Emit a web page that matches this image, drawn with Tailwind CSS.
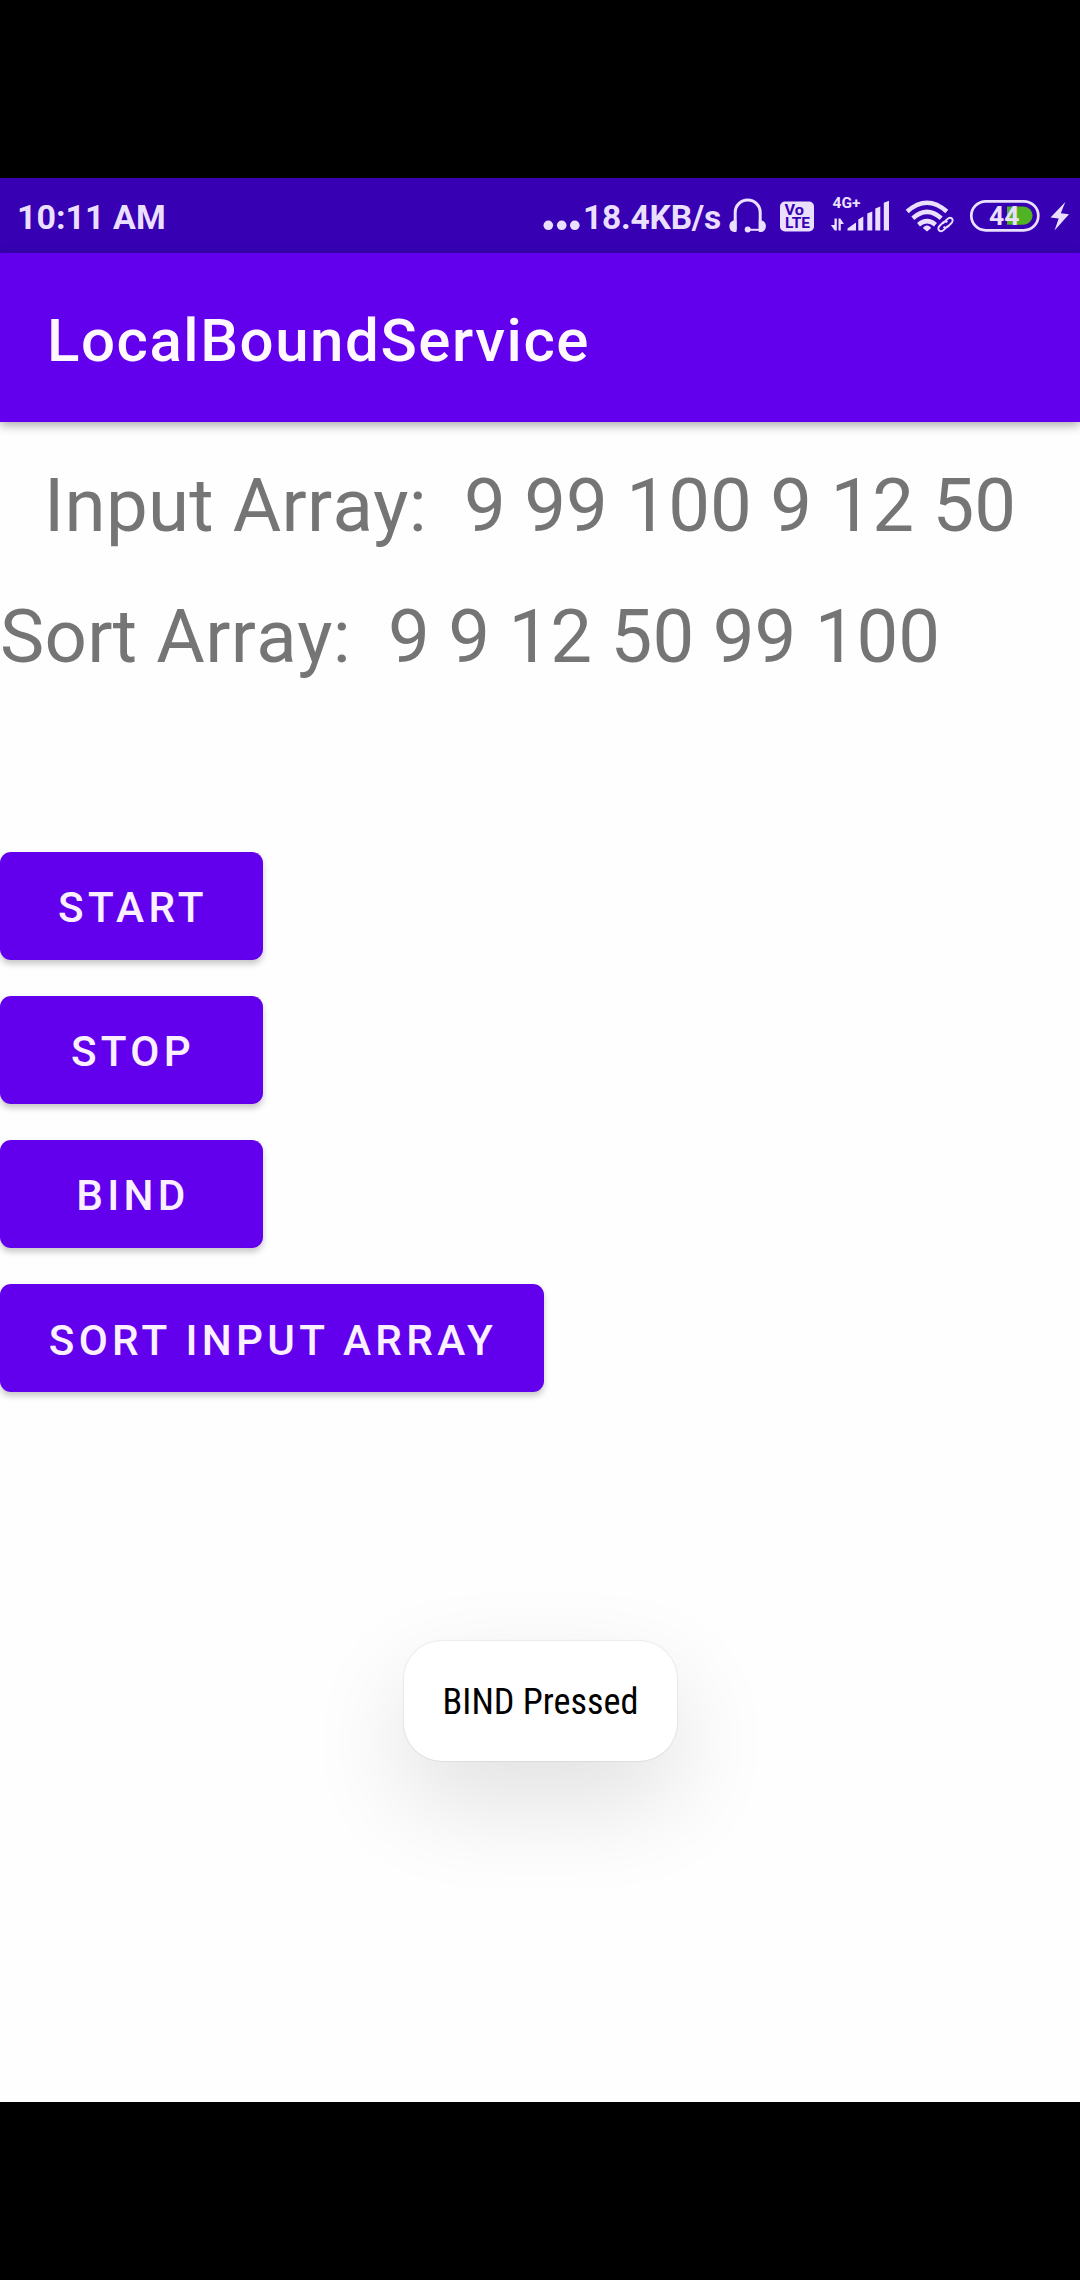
<!DOCTYPE html>
<html lang="en">
<head>
<meta charset="utf-8">
<title>LocalBoundService</title>
<script src="https://cdn.jsdelivr.net/npm/@tailwindcss/browser@4"></script>
</head>
<body class="bg-black font-[Roboto,sans-serif]">
<div class="flex h-[2280px] w-[1080px] flex-col overflow-hidden bg-black pt-[178px]">
  <!-- Status bar -->
  <header class="flex h-[75px] shrink-0 items-center bg-[#3700b3] text-[#ebdfff]">
    <span class="w-[522px] pl-[17px] pt-[3px] text-[34px] leading-[40px] font-bold whitespace-nowrap">10:11 AM</span>
    <svg class="h-[75px] w-[61px] shrink-0" viewBox="522 178 61 75" fill="currentColor"><circle cx="548.3" cy="225.3" r="4.8"/><circle cx="561.7" cy="225.3" r="4.8"/><circle cx="574.8" cy="225.3" r="4.8"/></svg>
    <span class="w-[143px] pt-[4px] text-[33.5px] leading-[40px] font-bold tracking-[-0.2px] whitespace-nowrap">18.4KB/s</span>
    <!-- Headset -->
    <svg class="h-[75px] w-[44px] shrink-0" viewBox="726 178 44 75" fill="none" stroke="currentColor">
      <path d="M735.2 230V212.5a12.2 12.2 0 0 1 25 0V230" stroke-width="3"/>
      <path d="M748 229.8H759" stroke-width="2"/>
      <path d="M736.5 220.5v11.5h-2.200c-2.600 0-4.900-2.200-4.900-5.700s2.200-5.800 4.900-5.800zM758.800 220.500v11.500h2.200c2.600 0 4.900-2.200 4.900-5.700s-2.200-5.800-4.900-5.800z" fill="currentColor" stroke="none"/>
      <circle cx="747.7" cy="229.4" r="3" fill="currentColor" stroke="none"/>
    </svg>
    <!-- VoLTE -->
    <svg class="h-[75px] w-[55px] shrink-0" viewBox="770 178 55 75">
      <rect x="780" y="201.500" width="34" height="30" rx="5" fill="currentColor"/>
      <g fill="#3700b3" font-weight="700"><text x="784.500" y="214.500" font-size="14.500" textLength="19.500" lengthAdjust="spacingAndGlyphs">Vo</text><text x="785" y="228.300" font-size="15" textLength="25" lengthAdjust="spacingAndGlyphs">LTE</text></g>
    </svg>
    <!-- Mobile signal -->
    <svg class="h-[75px] w-[72px] shrink-0" viewBox="825 178 72 75" fill="currentColor">
      <text x="832.500" y="208" font-size="15" font-weight="700" textLength="28" lengthAdjust="spacingAndGlyphs">4G+</text>
      <path d="M834.500 218.500h2.300V230.500h-2l-4-5.500h3.700zM838.500 230.500V218.500h1.800l3.600 5.500h-3.100v6.500z"/>
      <path d="M847.500 230.500v-2l8.500-6v8zM858.300 219.500l5-3v14h-5zM867.300 213.500l5-2v19h-5zM875.300 208.500l5-2v24h-5zM883.800 202.800l5.200-2v29.700h-5.200z"/>
    </svg>
    <!-- Wi-Fi with link badge -->
    <svg class="h-[75px] w-[65px] shrink-0" viewBox="897 178 65 75" fill="none" stroke="currentColor">
      <path d="M907.200 211.500q19.800-17.500 39.600 0M912.800 218.200q14.200-12.500 28.400 0M918.500 224.700q8.500-7 17 0" stroke-width="4.500"/>
      <path d="M922.800 228l1.500-1.600q2.700-1.800 5.400 0l1.500 1.600-4.200 3.500z" fill="currentColor" stroke="none"/>
      <path d="M942.800 223.500l4.400-4.300c3.500-3.400 7.500.4 4.300 3.800l-3.500 3.500c-1.600 1.500-3.300 1.300-4.500.2M947.300 222.300c-1.200-1.100-2.900-1.100-4.300.2l-3.500 3.500c-3.200 3.500.9 7.200 4.300 3.800l4-4" stroke-width="1.900"/>
    </svg>
    <!-- Battery and charging bolt -->
    <svg class="h-[75px] w-[118px] shrink-0" viewBox="962 178 118 75">
      <rect x="971.300" y="201.300" width="67" height="29" rx="14.500" fill="none" stroke="currentColor" stroke-width="2.700"/>
      <path d="M1007 206.500h16.500a9 9 0 0 1 0 18.200H1007z" fill="#4fb324"/>
      <text x="989" y="224.800" font-size="26" font-weight="700" fill="currentColor" textLength="30.500" lengthAdjust="spacingAndGlyphs">44</text>
      <path d="M1065.300 202l-14.800 15.500 8.200 1-4.200 12L1069 214.300l-8.200-1z" fill="currentColor"/>
    </svg>
  </header>
  <!-- App bar -->
  <div class="relative z-10 flex h-[169px] shrink-0 items-center bg-[#6200ee] px-[47px] shadow-[0_3px_10px_rgba(0,0,0,0.35)]">
    <h1 class="pt-[7px] text-[60px] leading-[70px] font-medium tracking-[1.55px] text-[#fff8ff] whitespace-nowrap">LocalBoundService</h1>
  </div>
  <main class="relative flex h-[1680px] shrink-0 flex-col items-start bg-[#fefefe]">
    <p class="pt-[40px] pl-[44px] text-[74.4px] leading-[88px] whitespace-pre text-[#757575] [font-kerning:none]"><span class="tracking-[0.3px]">Input Array:</span>  9 99 100 9 12 50</p>
    <p class="pt-[43px] text-[74.4px] leading-[88px] whitespace-pre text-[#757575] [font-kerning:none]"><span class="tracking-[0.35px]">Sort Array:</span>  9 9 12 50 99 100</p>
    <div class="mt-[170.500px] flex flex-col items-start gap-[36.3px] text-[42.250px] font-medium tracking-[4.3px] text-[#fbf0ff]">
      <button class="h-[108px] w-[263px] rounded-[11px] bg-[#6200ee] pt-[4px] pl-[3px] shadow-[0_4px_6px_rgba(0,0,0,0.22)]">START</button>
      <button class="h-[108px] w-[263px] rounded-[11px] bg-[#6200ee] pt-[4px] pl-[3px] shadow-[0_4px_6px_rgba(0,0,0,0.22)]">STOP</button>
      <button class="h-[108px] w-[263px] rounded-[11px] bg-[#6200ee] pt-[4px] pl-[3px] shadow-[0_4px_6px_rgba(0,0,0,0.22)]">BIND</button>
      <button class="h-[108px] w-[544px] rounded-[11px] bg-[#6200ee] pt-[4px] pl-[2px] whitespace-nowrap shadow-[0_4px_6px_rgba(0,0,0,0.22)]">SORT INPUT ARRAY</button>
    </div>
    <!-- Toast -->
    <div class="absolute top-[1219px] left-[404px] flex h-[120px] w-[273px] items-center justify-center rounded-[38px] bg-white pt-[2px] shadow-[0_0_1px_1px_rgba(0,0,0,0.06),0_40px_100px_rgba(0,0,0,0.12)]">
      <span class="text-[36.2px] leading-none font-normal text-black whitespace-nowrap [font-stretch:75%]">BIND Pressed</span>
    </div>
  </main>
</div>
</body>
</html>
